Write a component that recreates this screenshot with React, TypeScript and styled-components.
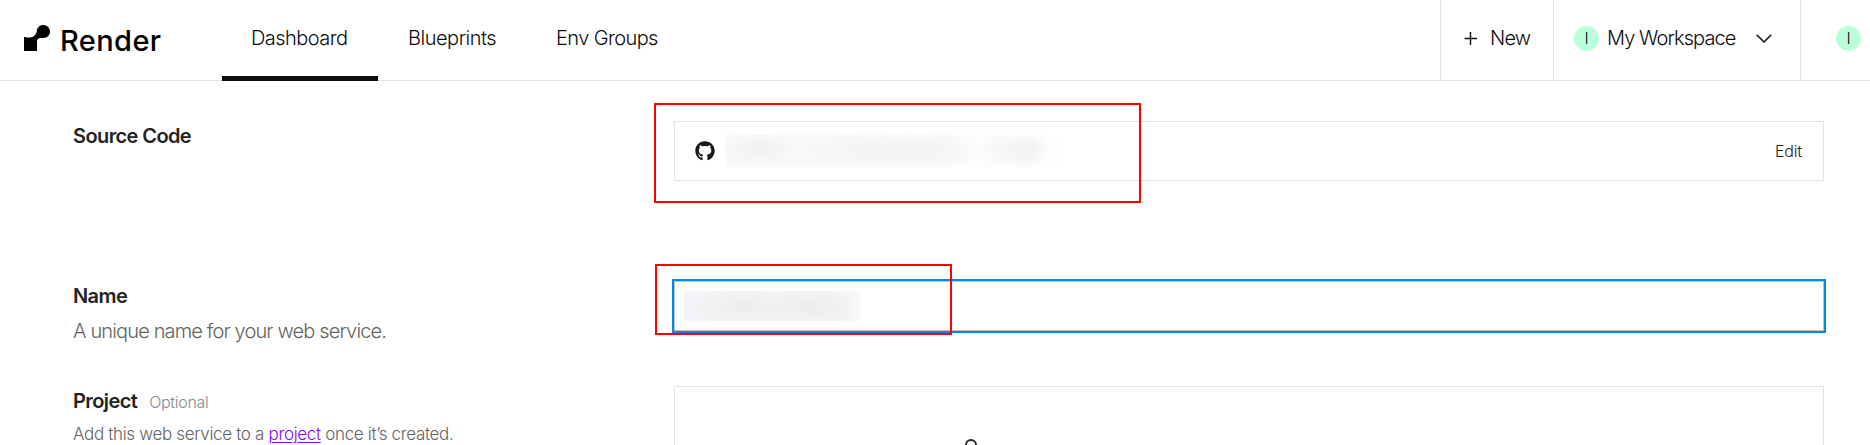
import React from "react";
import styled, { createGlobalStyle } from "styled-components";
import { FaGithub } from "react-icons/fa";

const GlobalStyle = createGlobalStyle`
  *, *::before, *::after { box-sizing: border-box; }
  body {
    margin: 0;
    background: #fff;
    color: #0d0d0d;
    font-family: Inter, "Liberation Sans", sans-serif;
    overflow: hidden;
  }
`;

const Page = styled.div`
  height: 445px;
  overflow: hidden;
`;

const Header = styled.header`
  display: flex;
  height: 81px;
  border-bottom: 1px solid #e3e3e3;
`;

const Brand = styled.a`
  display: flex;
  width: 222px;
  padding: 25px 0 0 24px;
`;

const BrandMark = styled.svg`
  flex: none;
  margin-right: 10px;
`;

const BrandName = styled.span`
  margin-top: 1px;
  font-family: Inter, sans-serif;
  font-size: 29px;
  line-height: 30px;
  font-weight: 500;
  letter-spacing: 0.4px;
  color: #000;
`;

const Nav = styled.nav`
  display: flex;
  flex: 1;
`;

const Tab = styled.a<{ $width: number; $pad?: number; $spacing: number; $active?: boolean }>`
  width: ${(p) => p.$width}px;
  height: 81px;
  padding: 24px 0 0 ${(p) => p.$pad ?? 29}px;
  font-size: 20px;
  line-height: 28px;
  font-weight: 350;
  letter-spacing: ${(p) => p.$spacing}px;
  white-space: nowrap;
  border-bottom: ${(p) => (p.$active ? "5px solid #0d0d0d" : "none")};
`;

const HeaderCell = styled.div<{ $width: number; $pad: number }>`
  display: flex;
  align-items: flex-start;
  width: ${(p) => p.$width}px;
  padding: 24px 0 0 ${(p) => p.$pad}px;
  border-left: 1px solid #e3e3e3;
`;

const CellLabel = styled.span<{ $width: number; $left: number; $spacing: number }>`
  width: ${(p) => p.$width}px;
  margin-left: ${(p) => p.$left}px;
  font-size: 20px;
  line-height: 28px;
  font-weight: 350;
  letter-spacing: ${(p) => p.$spacing}px;
  white-space: nowrap;
`;

const CellIcon = styled.svg`
  flex: none;
  margin-top: 7px;
`;

const Avatar = styled.span`
  display: flex;
  flex: none;
  align-items: center;
  justify-content: center;
  width: 25px;
  height: 25px;
  margin-top: 2px;
  border-radius: 50%;
  background: #b9ffd9;
  font-size: 16px;
  line-height: 25px;
  font-weight: 300;
`;

const Form = styled.main`
  display: flex;
  flex-direction: column;
  padding: 40px 46px 0 73px;
`;

const Row = styled.section<{ $height: number }>`
  display: grid;
  grid-template-columns: 601px 1fr;
  height: ${(p) => p.$height}px;
`;

const Title = styled.h2`
  margin: 0;
  font-size: 20px;
  line-height: 28px;
  font-weight: 600;
  letter-spacing: -0.6px;
  color: #232323;
`;

const TitleLine = styled.div`
  display: flex;
  align-items: baseline;
  gap: 12px;
`;

const Optional = styled.span`
  font-size: 16px;
  font-weight: 350;
  letter-spacing: -0.3px;
  color: #8a8a8a;
`;

const Description = styled.p<{ $small?: boolean }>`
  margin: ${(p) => (p.$small ? "5px 0 0" : "7px 0 0")};
  font-size: ${(p) => (p.$small ? 17 : 20)}px;
  line-height: 28px;
  font-weight: 350;
  letter-spacing: ${(p) => (p.$small ? -0.33 : -0.85)}px;
  color: #636363;
  white-space: nowrap;
`;

const InlineLink = styled.a`
  color: #8a05ff;
  text-decoration: underline;
  text-decoration-thickness: 1px;
  text-underline-offset: 2px;
`;

const LabelColumn = styled.div`
  padding-top: 1px;
`;

const Field = styled.div`
  position: relative;
`;

const RepoBox = styled.div`
  display: flex;
  align-items: center;
  height: 60px;
  padding: 0 21px 0 20px;
  border: 1px solid #e3e3e3;
`;

const Redacted = styled.div`
  width: 341px;
  height: 32px;
  margin-left: 10px;
  background:
    radial-gradient(ellipse 38px 18px at 34px 15px, #f0f0f0, transparent),
    radial-gradient(ellipse 80px 18px at 145px 15px, #f3f3f3, transparent),
    radial-gradient(ellipse 65px 18px at 195px 15px, #f2f2f2, transparent),
    radial-gradient(ellipse 34px 18px at 286px 15px, #f4f4f4, transparent),
    radial-gradient(ellipse 22px 18px at 304px 16px, #f1f1f1, transparent),
    linear-gradient(90deg, #f9f9f9 0, #fafafa 230px, #fdfdfd 252px, #fbfbfb 280px, #fefefe 330px, #fff);
`;

const EditButton = styled.a`
  margin-left: auto;
  font-size: 16px;
  line-height: 24px;
  font-weight: 350;
  letter-spacing: -0.15px;
  color: #232323;
`;

const NameInput = styled.div`
  display: flex;
  height: 50px;
  padding: 9px;
  border: 1px solid #c4c4c4;
  outline: 2px solid #0089e6;
`;

const RedactedName = styled.div`
  width: 177px;
  height: 30px;
  background:
    linear-gradient(90deg, transparent 162px, #f9fafb 177px),
    radial-gradient(ellipse 60px 20px at 59px 16px, #ededed, transparent),
    radial-gradient(ellipse 48px 20px at 123px 16px, #ededed, transparent),
    radial-gradient(ellipse 30px 16px at 148px 16px, #f0f0f0, transparent),
    #f4f5f8;
`;

const ProjectBox = styled.div`
  height: 180px;
  padding: 52px 0 0 290px;
  border: 1px solid #e3e3e3;
`;

const Highlight = styled.div<{ $x: number; $y: number; $w: number; $h: number }>`
  position: absolute;
  left: ${(p) => p.$x}px;
  top: ${(p) => p.$y}px;
  width: ${(p) => p.$w}px;
  height: ${(p) => p.$h}px;
  border: 2px solid #ff0000;
  pointer-events: none;
`;

export default function App() {
  return (
    <Page>
      <GlobalStyle />
      <Header>
        <Brand>
          <BrandMark width="26" height="26" viewBox="0 0 26 26">
            <path
              d="M19.2 0C15.8 0 13 2.7 12.8 6.1C12.4 9.6 9.6 12.6 6 12.6C3.8 12.6 1.8 12.3 0 11.7V26H13V16.2C13 14.3 14.5 13 16.3 13H19.5C23.1 13 26 10.1 26 6.5S23 0 19.2 0Z"
              fill="#000"
            />
          </BrandMark>
          <BrandName>Render</BrandName>
        </Brand>
        <Nav>
          <Tab $width={156} $spacing={-0.54} $active>Dashboard</Tab>
          <Tab $width={149} $pad={30} $spacing={-0.48}>Blueprints</Tab>
          <Tab $width={160} $spacing={-0.6}>Env Groups</Tab>
        </Nav>
        <HeaderCell $width={113} $pad={23}>
          <CellIcon width="14" height="14" viewBox="0 0 14 14">
            <path d="M0.5 7.5H13M6.5 1V14" stroke="#0d0d0d" strokeWidth="1.4" fill="none" />
          </CellIcon>
          <CellLabel $width={50} $left={12} $spacing={-0.8}>New</CellLabel>
        </HeaderCell>
        <HeaderCell $width={247} $pad={20}>
          <Avatar>I</Avatar>
          <CellLabel $width={149} $left={8} $spacing={-0.9}>My Workspace</CellLabel>
          <CellIcon width="16" height="14" viewBox="0 0 16 14">
            <path d="M0.7 3.7L8 11L15.3 3.7" stroke="#0d0d0d" strokeWidth="1.5" fill="none" />
          </CellIcon>
        </HeaderCell>
        <HeaderCell $width={70} $pad={35}>
          <Avatar>I</Avatar>
        </HeaderCell>
      </Header>
      <Form>
        <Row $height={160}>
          <LabelColumn>
            <Title>Source Code</Title>
          </LabelColumn>
          <Field>
            <RepoBox>
              <FaGithub size={20} color="#171717" />
              <Redacted />
              <EditButton>Edit</EditButton>
            </RepoBox>
            <Highlight $x={-20} $y={-18} $w={487} $h={100} />
          </Field>
        </Row>
        <Row $height={105}>
          <LabelColumn>
            <Title>Name</Title>
            <Description>A unique name for your web service.</Description>
          </LabelColumn>
          <Field>
            <NameInput>
              <RedactedName />
            </NameInput>
            <Highlight $x={-19} $y={-17} $w={297} $h={71} />
          </Field>
        </Row>
        <Row $height={180}>
          <LabelColumn>
            <TitleLine>
              <Title>Project</Title>
              <Optional>Optional</Optional>
            </TitleLine>
            <Description $small>
              Add this web service to a <InlineLink>project</InlineLink> once it’s created.
            </Description>
          </LabelColumn>
          <Field>
            <ProjectBox>
              <svg width="12" height="12" viewBox="0 0 12 12" display="block">
                <circle cx="6" cy="6" r="5" fill="none" stroke="#222" strokeWidth="2" />
              </svg>
            </ProjectBox>
          </Field>
        </Row>
      </Form>
    </Page>
  );
}
